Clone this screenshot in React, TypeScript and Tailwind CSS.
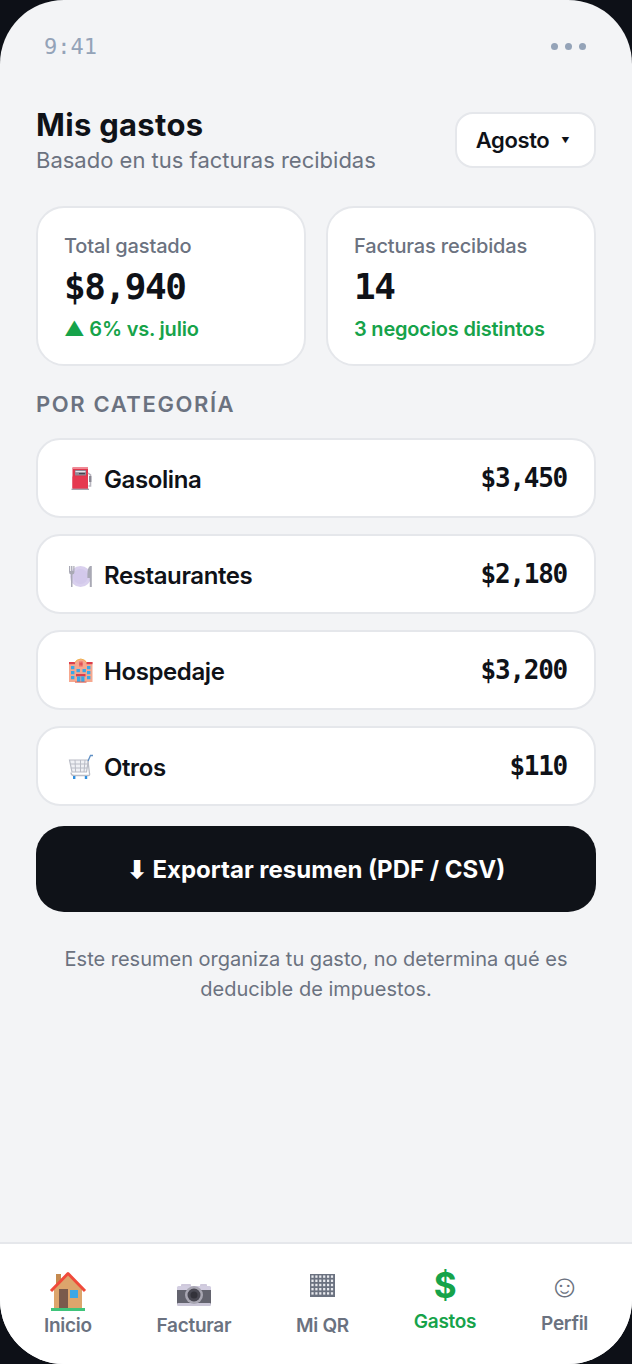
import type { ReactNode } from 'react'

const BODY = "font-['Inter','Noto_Sans',sans-serif]"
const MONO = "font-['DejaVu_Sans_Mono',monospace]"

function PumpIcon() {
  return (
    <svg width="26" height="26" viewBox="4 3 26 26">
      <rect x="8.5" y="5" width="15.5" height="22" rx="1.5" fill="#e0364c" />
      <rect x="8.5" y="5" width="15.5" height="2" fill="#f08a96" />
      <rect x="8.5" y="14.5" width="15.5" height="12.5" fill="#e53950" />
      <rect x="11" y="8" width="11" height="5.5" rx="0.5" fill="#8d8a96" />
      <rect x="11.5" y="9" width="10" height="1.2" fill="#e8e6ec" />
      <rect x="15" y="11" width="6" height="1.2" fill="#47454f" />
      <path d="M24 11 L26.5 13 V24 H24.5" fill="none" stroke="#b8b6bf" strokeWidth="1.6" />
      <rect x="25" y="14" width="2.4" height="6" fill="#8a8893" />
      <rect x="7.5" y="26.6" width="17.5" height="1.4" fill="#a5a3ad" />
    </svg>
  )
}

function PlateIcon() {
  return (
    <svg width="26" height="26" viewBox="4 1 26 26">
      <circle cx="16.5" cy="16.5" r="10.5" fill="#d9d0ee" />
      <circle cx="16.5" cy="16.5" r="7.5" fill="#d3c9eb" />
      <path d="M5 6 V12 Q5 14 7 14.5 V27 H8.5 V14.5 Q10.5 14 10.5 12 V6 H9.3 V11 H8.4 V6 H7.1 V11 H6.2 V6 Z" fill="#a9a9b5" />
      <path d="M26 6 Q23.4 8 23.4 14 V18 H25.8 V27 H27.8 V6 Z" fill="#a9a9b5" />
    </svg>
  )
}

function HotelIcon() {
  const windows = [
    [7, 12], [7, 17], [7, 22], [23, 12], [23, 17], [23, 22], [12.5, 15], [18.5, 15],
  ]
  return (
    <svg width="26" height="26" viewBox="4 3 26 26">
      <rect x="5" y="8" width="23.5" height="20" fill="#f6a88f" />
      <rect x="5" y="8" width="23.5" height="2.2" fill="#dc3d4c" />
      <path d="M11 9 Q11 6 16.8 5 Q22.5 6 22.5 9 V13 H11 Z" fill="#f6a88f" />
      <path d="M11 8.5 Q12 5.6 16.8 5 Q21.5 5.6 22.5 8.5" fill="none" stroke="#f0b04a" strokeWidth="1" />
      <rect x="15.5" y="7.5" width="1" height="5" fill="#dc3d4c" />
      <rect x="17.4" y="7.5" width="1" height="5" fill="#dc3d4c" />
      <rect x="15.5" y="9.5" width="3" height="1" fill="#dc3d4c" />
      {windows.map(([x, y]) => (
        <rect key={`${x}-${y}`} x={x} y={y} width="3.4" height="3.2" fill="#3ba7e6" />
      ))}
      <rect x="12" y="20" width="9.5" height="2.4" fill="#dc3d4c" />
      <rect x="13" y="22.4" width="7.5" height="5.6" fill="#3ba7e6" />
      <rect x="16.4" y="22.4" width="0.8" height="5.6" fill="#f6a88f" />
      <rect x="11" y="27.6" width="11.5" height="1" fill="#e2574a" />
    </svg>
  )
}

function CartIcon() {
  return (
    <svg width="26" height="26" viewBox="4 1 26 26">
      <path d="M5.5 8 H24.5 L22.5 20 H8 Z" fill="#f0f1f5" stroke="#b9bcc6" strokeWidth="1.2" />
      <path d="M6 12 H23.8 M6.8 16 H23.2 M11 8 L11.6 20 M16.5 8 V20 M21 8 L20 20" stroke="#b9bcc6" strokeWidth="1" fill="none" />
      <path d="M24 9 L26.5 3.5 H29" fill="none" stroke="#5f8fc4" strokeWidth="1.3" />
      <path d="M7 20.5 Q7 23.5 10 23.5 H24.5 Q26 23.5 25.5 21.5 L24 9" fill="none" stroke="#b9bcc6" strokeWidth="1.3" />
      <rect x="9" y="24" width="2.4" height="3" fill="#2f8fe0" />
      <rect x="20.8" y="24" width="2.4" height="3" fill="#2f8fe0" />
    </svg>
  )
}

function HouseIcon() {
  return (
    <svg width="44" height="44" viewBox="0 0 44 44">
      <rect x="10" y="5" width="5" height="14" fill="#c58a4f" />
      <path d="M8 18 L22 6 L36 18 V40 H8 Z" fill="#dca56c" />
      <rect x="13" y="20" width="9" height="20" fill="#7a5a4c" />
      <rect x="24" y="21" width="8" height="8" fill="#3aa7e8" />
      <path d="M5 22 L22 4.5 L39 22" fill="none" stroke="#f04a3a" strokeWidth="3" strokeLinejoin="round" />
      <rect x="5" y="39" width="34" height="3" fill="#3fc47a" />
    </svg>
  )
}

function CameraIcon() {
  return (
    <svg width="44" height="38" viewBox="0 0 44 38">
      <rect x="9" y="9" width="10" height="4" rx="1" fill="#cfc9dc" />
      <rect x="28" y="9" width="7" height="4" rx="1" fill="#cfc9dc" />
      <rect x="5" y="11" width="34" height="5" rx="1.5" fill="#d2cde0" />
      <rect x="5" y="15" width="34" height="14" fill="#63636e" />
      <rect x="5" y="28" width="34" height="3" rx="1.2" fill="#c9c5d6" />
      <circle cx="22" cy="20" r="9" fill="#a8a6b2" />
      <circle cx="22" cy="20" r="6.5" fill="#4a4953" />
      <circle cx="22" cy="20" r="3.5" fill="#33323a" />
    </svg>
  )
}

function GridIcon() {
  const cells: number[][] = []
  for (let r = 0; r < 5; r++) for (let c = 0; c < 6; c++) cells.push([c, r])
  return (
    <svg width="25" height="23" viewBox="0 0 25 23" className="mb-[16px]">
      <rect width="25" height="23" fill="#6b7280" />
      {cells.map(([c, r]) => (
        <rect key={`${c}-${r}`} x={1.4 + c * 3.9} y={1.4 + r * 4.2} width="2.2" height="2.4" fill="#e9eaee" />
      ))}
    </svg>
  )
}

const CATEGORIES = [
  { id: 1, icon: <PumpIcon />, title: 'Gasolina', amount: '$3,450' },
  { id: 2, icon: <PlateIcon />, title: 'Restaurantes', amount: '$2,180' },
  { id: 3, icon: <HotelIcon />, title: 'Hospedaje', amount: '$3,200' },
  { id: 4, icon: <CartIcon />, title: 'Otros', amount: '$110' },
]

const NAV: { id: number; icon: ReactNode; box: string; title: string; active: boolean }[] = [
  { id: 1, icon: <HouseIcon />, box: 'h-[49px]', title: 'Inicio', active: false },
  { id: 2, icon: <CameraIcon />, box: 'h-[49px]', title: 'Facturar', active: false },
  { id: 3, icon: <GridIcon />, box: 'h-[49px]', title: 'Mi QR', active: false },
  {
    id: 4,
    icon: <span className="mb-[6px] text-[35px] leading-none font-bold">$</span>,
    box: 'h-[45px]',
    title: 'Gastos',
    active: true,
  },
  {
    id: 5,
    icon: <span className="mb-[9px] text-[32px] leading-none font-normal">☺</span>,
    box: 'h-[47px]',
    title: 'Perfil',
    active: false,
  },
]

function StatCard({ label, value, note }: { label: string; value: string; note: string }) {
  return (
    <div className="flex h-[160px] flex-col rounded-[28px] border-2 border-[#e5e7eb] bg-white px-[26px] pt-[25px]">
      <div className="text-[20px] leading-[26px] font-medium tracking-[-0.15px] text-[#6b7280]">{label}</div>
      <div className={`mt-[6px] ${MONO} text-[36px] leading-[44px] font-bold tracking-[-1.4px] text-[#0f1218]`}>
        {value}
      </div>
      <div className="mt-[7px] text-[20px] leading-[26px] font-semibold tracking-[-0.2px] text-[#16a34a]">{note}</div>
    </div>
  )
}

export default function App() {
  return (
    <div className={`h-[1364px] w-[632px] overflow-hidden bg-[#0d1017] ${BODY}`}>
      <div className="flex h-full flex-col overflow-hidden rounded-[64px] bg-[#f3f4f6]">
        {/* status bar */}
        <div className="flex h-[92px] shrink-0 items-center justify-between pr-[46px] pl-[44px]">
          <span className={`${MONO} text-[22px] text-[#94a3b8]`}>9:41</span>
          <div className="flex gap-[7px]">
            <span className="size-[7px] rounded-full bg-[#94a3b8]" />
            <span className="size-[7px] rounded-full bg-[#94a3b8]" />
            <span className="size-[7px] rounded-full bg-[#94a3b8]" />
          </div>
        </div>

        <div className="flex flex-1 flex-col px-[36px] pt-[20px]">
          {/* header */}
          <div className="flex items-start justify-between">
            <div className="-mt-[5px]">
              <h1 className="text-[31px] leading-[36px] font-bold tracking-[0.3px] text-[#0f1218]">Mis gastos</h1>
              <p className="mt-[2px] text-[22px] leading-[30px] text-[#6b7280]">Basado en tus facturas recibidas</p>
            </div>
            <button
              type="button"
              className="flex h-[56px] w-[141px] items-center justify-center gap-[12px] rounded-[18px] border-2 border-[#e5e7eb] bg-white pr-[6px] text-[22px] font-semibold tracking-[-0.4px] text-[#0f1218]"
            >
              Agosto
              <span className="text-[8px]">▼</span>
            </button>
          </div>

          {/* stats */}
          <div className="mt-[31px] grid grid-cols-2 gap-[20px]">
            <StatCard label="Total gastado" value="$8,940" note="▲ 6% vs. julio" />
            <StatCard label="Facturas recibidas" value="14" note="3 negocios distintos" />
          </div>

          <div className="mt-[24px] text-[22px] leading-[28px] font-semibold tracking-[1.6px] text-[#6b7280]">
            POR CATEGORÍA
          </div>

          {/* categories */}
          <div className="mt-[20px] flex flex-col gap-[16px]">
            {CATEGORIES.map((c) => (
              <div
                key={c.id}
                className="flex h-[80px] items-center justify-between rounded-[24px] border-2 border-[#e5e7eb] bg-white pr-[27px] pl-[30px]"
              >
                <div className="flex items-center gap-[10px] text-[24px] font-semibold tracking-[-0.4px] text-[#0f1218]">
                  {c.icon}
                  <span className="pt-[3px]">{c.title}</span>
                </div>
                <span className={`${MONO} pt-[1px] text-[26px] font-bold tracking-[-1.25px] text-[#0f1218]`}>
                  {c.amount}
                </span>
              </div>
            ))}
          </div>

          <button
            type="button"
            className="mt-[20px] h-[86px] w-full rounded-[28px] bg-[#0f1218] pt-[2px] text-[24px] font-bold text-white"
          >
            ⬇ Exportar resumen (PDF / CSV)
          </button>

          <p className="mt-[32px] px-[20px] text-center text-[20px] leading-[30px] text-[#6b7280]">
            Este resumen organiza tu gasto, no determina qué es deducible de impuestos.
          </p>
        </div>

        {/* bottom nav */}
        <nav className="flex h-[122px] shrink-0 justify-between border-t-2 border-[#e5e7eb] bg-white px-[44px] pt-[20px]">
          {NAV.map((n) => (
            <div
              key={n.id}
              className={`flex flex-col items-center text-[19px] font-semibold tracking-[-0.3px] ${n.active ? 'text-[#16a34a]' : 'text-[#6b7280]'}`}
            >
              <span className={`flex ${n.box} items-end justify-center`}>{n.icon}</span>
              <span className="leading-[26px]">{n.title}</span>
            </div>
          ))}
        </nav>
      </div>
    </div>
  )
}
